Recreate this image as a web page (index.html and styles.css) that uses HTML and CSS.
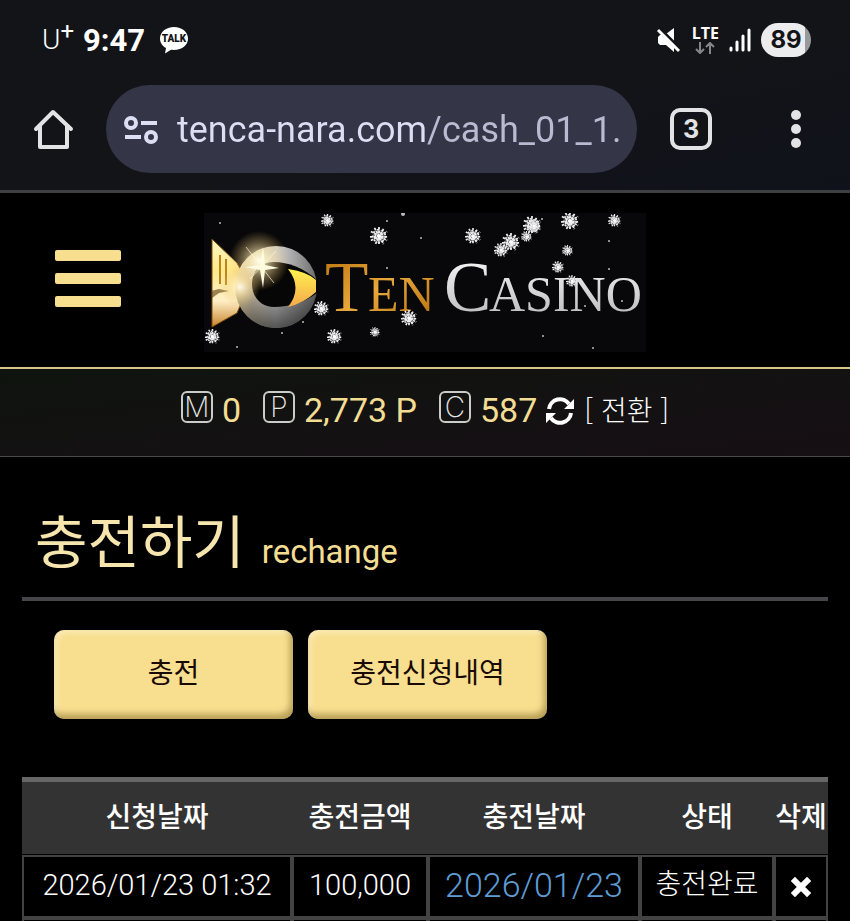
FILE: index.html
```html
<!DOCTYPE html>
<html lang="ko">
<head>
    <meta charset="UTF-8">
    <meta name="viewport" content="width=device-width, initial-scale=1.0">
    <title>TEN CASINO</title>
    <link rel="stylesheet" href="styles.css">
</head>
<body>
    <div class="screen">
        <div class="browser">
            <div class="status-bar">
                <span class="carrier">U<sup>+</sup></span>
                <span class="time">9:47</span>
                <svg class="talk" width="30" height="28" viewBox="0 0 30 28">
                    <path d="M15 1C7 1 1 6 1 12.500c0 4 2.300 7.500 6 9.500l-1 5.500 6-3.700c11 1 17-4.600 17-11.300C29 6 23 1 15 1z" fill="#fff"/>
                    <text x="15" y="16" text-anchor="middle" class="talk-text">TALK</text>
                </svg>
                <div class="status-icons">
                    <svg width="26" height="26" viewBox="0 0 26 26" fill="#fff">
                        <path d="M10 7l8-6v14z"/>
                        <path d="M2 10l2-2h4l10 11v6l-8-7H4l-2-2z"/>
                        <path d="M3 2l21 21" stroke="#131418" stroke-width="5"/>
                        <path d="M2 3l21 21" stroke="#fff" stroke-width="3"/>
                    </svg>
                    <div class="lte">
                        <span>LTE</span>
                        <svg width="20" height="12" viewBox="0 0 20 12" fill="none" stroke="#85868a" stroke-width="2">
                            <path d="M5 0v11M1 7l4 4 4-4M15 12V1M11 5l4-4 4 4"/>
                        </svg>
                    </div>
                    <svg width="22" height="24" viewBox="0 0 22 24" fill="none" stroke="#fff" stroke-width="3" stroke-linecap="round">
                        <path d="M2 20v2M8 14v8M14 8v14M20 2v20"/>
                    </svg>
                    <span class="battery">89</span>
                </div>
            </div>
            <div class="toolbar">
                <button class="icon-btn" aria-label="Home">
                    <svg width="42" height="42" viewBox="0 0 42 42" fill="none" stroke="#e3e3e5" stroke-width="4" stroke-linejoin="round" stroke-linecap="round">
                        <path d="M3 21L20 4l18 17"/>
                        <path d="M7 18v21h27V18"/>
                    </svg>
                </button>
                <label class="address">
                    <svg width="36" height="30" viewBox="0 0 36 30" fill="none" stroke="#dcdef4" stroke-width="4">
                        <circle cx="8" cy="8" r="5"/>
                        <path d="M18 8h16M2 22h16"/>
                        <circle cx="28" cy="22" r="5"/>
                    </svg>
                    <input type="text" value="tenca-nara.com/cash_01_1.asp" aria-label="Address">
                </label>
                <button class="icon-btn tabs">3</button>
                <button class="icon-btn more" aria-label="Menu">
                    <svg width="10" height="38" viewBox="0 0 10 38" fill="#e3e3e5">
                        <circle cx="5" cy="5" r="5"/>
                        <circle cx="5" cy="19" r="5"/>
                        <circle cx="5" cy="33" r="5"/>
                    </svg>
                </button>
            </div>
        </div>

        <header class="header">
            <button class="menu-btn" aria-label="메뉴">
                <span></span>
                <span></span>
                <span></span>
            </button>
            <a class="logo" href="#">
                <svg width="442" height="139" viewBox="0 0 442 139">
                    <defs>
                        <linearGradient id="gold" x1="0" y1="0" x2="1" y2="1">
                            <stop offset="0" stop-color="#b8720c"/>
                            <stop offset="0.5" stop-color="#e9a83a"/>
                            <stop offset="1" stop-color="#b06a08"/>
                        </linearGradient>
                        <linearGradient id="silver" x1="0" y1="0" x2="0" y2="1">
                            <stop offset="0" stop-color="#fff"/>
                            <stop offset="1" stop-color="#b4b4b8"/>
                        </linearGradient>
                        <linearGradient id="ring" x1="0" y1="0" x2="1" y2="0">
                            <stop offset="0" stop-color="#ffe9b0"/>
                            <stop offset="0.2" stop-color="#d8cdb4"/>
                            <stop offset="0.5" stop-color="#d2d2d4"/>
                            <stop offset="1" stop-color="#6b6b6b"/>
                        </linearGradient>
                        <linearGradient id="shade" x1="0" y1="0" x2="0" y2="1">
                            <stop offset="0.4" stop-color="#000" stop-opacity="0"/>
                            <stop offset="1" stop-color="#000" stop-opacity="0.6"/>
                        </linearGradient>
                        <linearGradient id="tail" x1="0" y1="0" x2="0" y2="1">
                            <stop offset="0" stop-color="#fff6c4"/>
                            <stop offset="0.35" stop-color="#ffe98c"/>
                            <stop offset="0.7" stop-color="#ffefc8"/>
                            <stop offset="1" stop-color="#c8842c"/>
                        </linearGradient>
                        <linearGradient id="eye" x1="0" y1="0" x2="0" y2="1">
                            <stop offset="0" stop-color="#fff04e"/>
                            <stop offset="1" stop-color="#f5a94c"/>
                        </linearGradient>
                        <radialGradient id="glow">
                            <stop offset="0" stop-color="#fffef0"/>
                            <stop offset="0.25" stop-color="#fff2c0" stop-opacity="0.7"/>
                            <stop offset="1" stop-color="#e0b050" stop-opacity="0"/>
                        </radialGradient>
                        <symbol id="flake" viewBox="-10 -10 20 20">
                            <circle r="7" fill="#8a8a8e" opacity="0.5"/>
                            <g fill="none" stroke="#ececee">
                                <path d="M0-10V10M-9-5L9 5M-9 5L9-5M-5-9L5 9M-10 1H9M5-8L-4 9" stroke-width="2" stroke-dasharray="3 1"/>
                                <circle r="4" stroke-width="2" stroke-dasharray="3 1"/>
                                <circle r="7" stroke-width="2" stroke-dasharray="2 3"/>
                            </g>
                            <circle r="2" fill="#fff"/>
                        </symbol>
                    </defs>
                    <rect width="442" height="139" fill="#08080a"/>
                    <!-- fish mark -->
                    <path d="M8 26l25 24 12 22-12 28L8 114z" fill="url(#tail)" stroke="#7c4a08"/>
                    <path d="M16 42v29M22 46v26" stroke="#b9851c" stroke-width="2"/>
                    <path d="M7 78l8-2 10 2-10 2-7 5z" fill="#5b3a0c" opacity="0.6"/>
                    <circle cx="72" cy="74" r="41" fill="url(#ring)"/>
                    <circle cx="72" cy="74" r="41" fill="url(#shade)"/>
                    <path d="M70 49c14 0 30 6 43 18v13c-12 9-27 14-43 14-13 0-22-10-22-23s9-22 22-22z" fill="#060606"/>
                    <path d="M84 56q20 3 28 11v12q-12 11-28 15 15-19 0-38z" fill="url(#eye)"/>
                    <circle cx="36" cy="74" r="20" fill="url(#glow)" opacity="0.9"/>
                    <circle cx="55" cy="48" r="30" fill="url(#glow)"/>
                    <path d="M59 34l2 18 14 3-14 2-2 18-3-18-15-3 15-2z" fill="#fffbe0"/>
                    <path d="M42 34l28 36M72 38L46 66" stroke="#fff8d0" opacity="0.7"/>

                    <text class="logo-text" y="98" fill="url(#gold)"><tspan class="cap" x="121">T</tspan><tspan class="small" x="164">EN</tspan></text>
                    <text class="logo-text" y="98" fill="url(#silver)"><tspan class="cap" x="240">C</tspan><tspan class="small" x="285">ASINO</tspan></text>

                    <g>
                        <use href="#flake" x="117" y="1" width="13" height="13"/>
                        <use href="#flake" x="166" y="14" width="18" height="18"/>
                        <use href="#flake" x="110" y="88" width="15" height="15"/>
                        <use href="#flake" x="123" y="116" width="15" height="15"/>
                        <use href="#flake" x="166" y="114" width="10" height="10"/>
                        <use href="#flake" x="197" y="97" width="16" height="16"/>
                        <use href="#flake" x="1" y="116" width="15" height="15"/>
                        <use href="#flake" x="261" y="15" width="16" height="16"/>
                        <use href="#flake" x="290" y="30" width="14" height="14"/>
                        <use href="#flake" x="298" y="20" width="18" height="18"/>
                        <use href="#flake" x="317" y="18" width="11" height="11"/>
                        <use href="#flake" x="319" y="3" width="18" height="18"/>
                        <use href="#flake" x="323" y="6" width="14" height="14"/>
                        <use href="#flake" x="357" y="-1" width="18" height="18"/>
                        <use href="#flake" x="404" y="1" width="13" height="13"/>
                        <use href="#flake" x="358" y="32" width="11" height="11"/>
                        <use href="#flake" x="348" y="48" width="12" height="12"/>
                        <use href="#flake" x="362" y="62" width="12" height="12"/>
                    </g>
                    <g fill="#bbb">
                        <circle cx="16" cy="10" r="1"/>
                        <circle cx="183" cy="8" r="1"/>
                        <circle cx="199" cy="1" r="2"/>
                        <circle cx="217" cy="25" r="1"/>
                        <circle cx="183" cy="55" r="1"/>
                        <circle cx="99" cy="109" r="1"/>
                        <circle cx="78" cy="120" r="1"/>
                        <circle cx="33" cy="134" r="1"/>
                        <circle cx="405" cy="28" r="1"/>
                        <circle cx="405" cy="56" r="1"/>
                        <circle cx="338" cy="6" r="1"/>
                        <circle cx="339" cy="123" r="1"/>
                        <circle cx="389" cy="135" r="1"/>
                        <circle cx="418" cy="88" r="1"/>
                        <circle cx="381" cy="93" r="1"/>
                    </g>
                </svg>
            </a>
        </header>

        <div class="points">
            <div class="point"><span class="badge">M</span>0</div>
            <div class="point"><span class="badge">P</span>2,773 P</div>
            <div class="point"><span class="badge">C</span>587</div>
            <a class="convert" href="#">
                <svg width="28" height="28" viewBox="0 0 28 28">
                    <path d="M3 12A11 11 0 0 1 23 7M25 16A11 11 0 0 1 5 21" fill="none" stroke="#fff" stroke-width="4"/>
                    <path d="M28 2v10H18zM0 26V16h10z" fill="#fff"/>
                </svg>
                <span>[ 전환 ]</span>
            </a>
        </div>

        <main class="content">
            <h1>충전하기 <small>rechange</small></h1>
            <div class="buttons">
                <button class="gold-btn">충전</button>
                <button class="gold-btn">충전신청내역</button>
            </div>
            <table class="history">
                <colgroup>
                    <col class="col-request">
                    <col class="col-amount">
                    <col class="col-date">
                    <col class="col-state">
                    <col class="col-delete">
                </colgroup>
                <thead>
                    <tr>
                        <th>신청날짜</th>
                        <th>충전금액</th>
                        <th>충전날짜</th>
                        <th>상태</th>
                        <th>삭제</th>
                    </tr>
                </thead>
                <tbody>
                    <tr>
                        <td>2026/01/23 01:32</td>
                        <td>100,000</td>
                        <td class="done-date">2026/01/23</td>
                        <td>충전완료</td>
                        <td>
                            <button class="delete-btn" aria-label="삭제">
                                <svg width="20" height="20" viewBox="0 0 20 20">
                                    <path d="M4 4l12 12M16 4L4 16" stroke="#fff" stroke-width="6" stroke-linecap="square"/>
                                </svg>
                            </button>
                        </td>
                    </tr>
                    <tr>
                        <td></td>
                        <td></td>
                        <td></td>
                        <td></td>
                        <td></td>
                    </tr>
                </tbody>
            </table>
        </main>
    </div>
</body>
</html>
```
FILE: styles.css
```css
* {
    box-sizing: border-box;
}
body {
    margin: 0;
    background: #000;
    color: #fff;
    font-family: Roboto, "Noto Sans CJK KR", sans-serif;
    font-size: 28px;
}
button {
    font-family: inherit;
    color: inherit;
    background: none;
    border: none;
    padding: 0;
    cursor: pointer;
}
a {
    color: inherit;
    text-decoration: none;
}
svg {
    display: block;
}
.screen {
    height: 100vh;
    overflow: hidden;
}

/* phone status bar + browser bar */
.browser {
    background: linear-gradient(to bottom right, #131418 60%, #10121b);
    border-bottom: 3px solid #3f4043;
}
.status-bar {
    display: flex;
    align-items: center;
    height: 80px;
    padding: 0 39px 0 42px;
}
.carrier {
    width: 41px;
    font-weight: 300;
    line-height: 32px;
}
.carrier sup {
    font-size: 24px;
    font-weight: 400;
    line-height: 0;
}
.time {
    width: 76px;
    font-size: 31px;
    font-weight: 700;
}
.talk-text {
    font-size: 10px;
    font-weight: 900;
    fill: #131418;
}
.status-icons {
    display: flex;
    align-items: center;
    gap: 10px;
    margin-left: auto;
}
.lte {
    display: flex;
    flex-direction: column;
    align-items: center;
    gap: 1px;
    font-family: "Open Sans", sans-serif;
    font-size: 16px;
    font-weight: 700;
    line-height: 15px;
}
.battery {
    width: 50px;
    border-radius: 17px;
    background: linear-gradient(to right, #ececee 88%, #98999c 88%);
    color: #131418;
    font-family: Inter, sans-serif;
    font-size: 24px;
    font-weight: 700;
    line-height: 34px;
    text-align: center;
}
.toolbar {
    display: flex;
    align-items: center;
    padding: 5px 49px 17px 33px;
}
.icon-btn {
    flex: none;
}
.address {
    display: flex;
    flex: 1;
    align-items: center;
    gap: 18px;
    min-width: 0;
    height: 88px;
    margin: 0 33px 0 31px;
    padding: 2px 17px 0;
    border-radius: 44px;
    background: #343546;
}
.address svg {
    flex: none;
}
.address input {
    flex: 1;
    min-width: 0;
    padding: 0;
    border: none;
    outline: none;
    background: linear-gradient(to right, #dcdef4 250px, #b9bbd2 250px);
    -webkit-background-clip: text;
    background-clip: text;
    color: transparent;
    font-family: Roboto, sans-serif;
    font-size: 36px;
    line-height: 48px;
}
.tabs {
    width: 42px;
    height: 42px;
    border: 4px solid #e3e3e5;
    border-radius: 10px;
    color: #e3e3e5;
    font-family: Inter, sans-serif;
    font-size: 25px;
    font-weight: 700;
    line-height: 32px;
}
.more {
    margin-left: 79px;
}

/* site header */
.header {
    display: flex;
    align-items: center;
    gap: 83px;
    padding: 20px 55px 15px;
    border-bottom: 2px solid #d9c48a;
}
.menu-btn {
    display: flex;
    flex-direction: column;
    gap: 12px;
    width: 66px;
    margin-bottom: 8px;
}
.menu-btn span {
    height: 11px;
    border-radius: 2px;
    background: #f8df90;
}
.logo-text {
    font-family: "Liberation Serif", serif;
}
.logo-text .cap {
    font-size: 71px;
}
.logo-text .small {
    font-size: 50px;
}

/* balances */
.points {
    display: flex;
    justify-content: center;
    gap: 22px;
    height: 88px;
    padding-top: 22px;
    border-bottom: 1px solid #4a4a4a;
    background: linear-gradient(to bottom right, #0f140e, #141113 60%, #160f13);
}
.point {
    display: flex;
    gap: 9px;
    color: #f3dd92;
    font-size: 34px;
    line-height: 38px;
}
.badge {
    width: 32px;
    height: 32px;
    border: 2px solid #c9ccc8;
    border-radius: 6px;
    color: #e6e8e5;
    font-family: Inter, sans-serif;
    font-size: 28px;
    font-weight: 200;
    line-height: 28px;
    text-align: center;
}
.convert {
    display: flex;
    align-items: center;
    gap: 10px;
    height: 40px;
    margin-left: -13px;
    font-family: "Noto Sans CJK KR", sans-serif;
    font-size: 28px;
    font-weight: 300;
}
.convert span {
    padding-bottom: 4px;
}

/* recharge page */
.content {
    padding: 0 22px;
}
h1 {
    display: flex;
    align-items: baseline;
    gap: 17px;
    margin: 0;
    padding: 49px 13px 0;
    height: 144px;
    border-bottom: 4px solid #464648;
    color: #f6e6ae;
    font-size: 57px;
    font-weight: 400;
    line-height: 76px;
}
h1 small {
    color: #f3dd92;
    font-size: 33px;
}
.buttons {
    display: flex;
    gap: 15px;
    padding: 29px 32px 58px;
}
.gold-btn {
    width: 239px;
    height: 89px;
    padding-bottom: 7px;
    border-radius: 10px;
    background: #f8df90;
    box-shadow: inset -3px -5px 6px rgba(120, 95, 30, 0.5), inset 3px 3px 5px rgba(255, 250, 225, 0.5);
    color: #1a0a04;
    font-size: 28px;
}
.history {
    width: 100%;
    table-layout: fixed;
    border-collapse: separate;
    border-spacing: 0;
    border-top: 5px solid #666;
}
.col-request {
    width: 270px;
}
.col-amount {
    width: 136px;
}
.col-date {
    width: 212px;
}
.col-state {
    width: 134px;
}
.col-delete {
    width: 54px;
}
.history th {
    height: 73px;
    padding: 0 0 7px;
    border-bottom: 1px solid #000;
    background: #343334;
    font-weight: 500;
    white-space: nowrap;
}
.history td {
    height: 63px;
    padding: 0 0 4px;
    border: 2px solid #434343;
    font-size: 29px;
    font-weight: 300;
    line-height: 40px;
    text-align: center;
    white-space: nowrap;
}
.history td:nth-child(4) {
    font-size: 28px;
}
.history .done-date {
    color: #5f9bd3;
    font-size: 34px;
}
.delete-btn {
    display: inline-block;
    vertical-align: middle;
}
```
